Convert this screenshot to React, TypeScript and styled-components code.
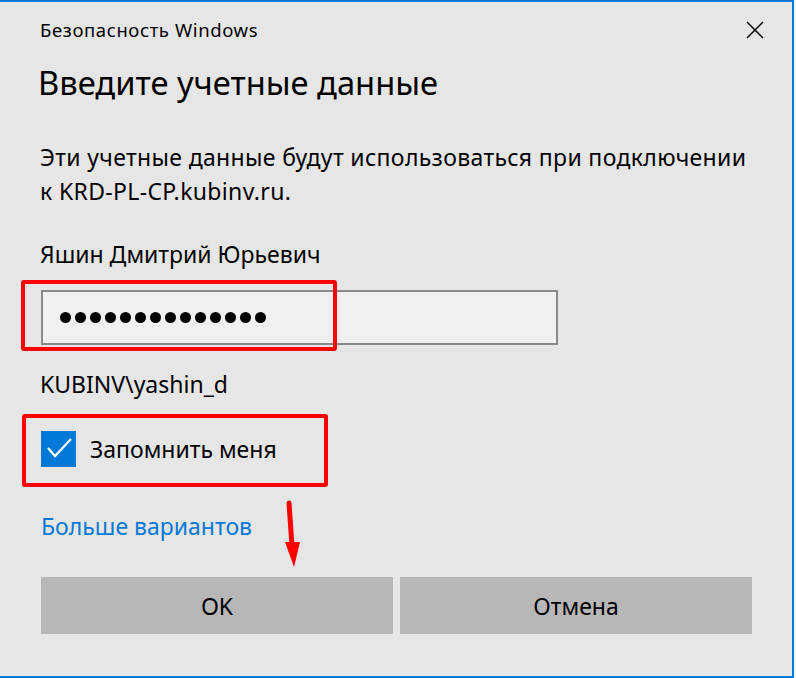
import React from "react";
import styled, { createGlobalStyle } from "styled-components";

const Global = createGlobalStyle`
  html, body { margin: 0; padding: 0; background: #f4f4f4; }
  body { font-family: "Noto Sans", "Open Sans", Arial, sans-serif; }
  * { box-sizing: border-box; }
`;

const Window = styled.div`
  position: relative;
  width: 794px;
  height: 678px;
  background: #e6e6e6;
  border-top: 2px solid #0078d7;
  border-right: 2px solid #0078d7;
  border-bottom: 2px solid #0078d7;
  padding: 0 40px;
  color: #000;
  display: flex;
  flex-direction: column;
`;

const TitleBar = styled.div`
  display: flex;
  align-items: center;
  justify-content: space-between;
  margin-top: 16px;
  margin-right: -12px;
  height: 24px;
`;

const TitleText = styled.div`
  font-size: 18.5px;
  letter-spacing: 0.6px;
  line-height: 24px;
`;

const Close = styled.button`
  width: 18px;
  height: 18px;
  padding: 0;
  border: none;
  background: transparent;
  display: flex;
`;

const Heading = styled.h1`
  margin: 21px 0 0 -2px;
  font-size: 32.7px;
  font-weight: 400;
  line-height: 40px;
`;

const Text = styled.p<{ $mt: number; $track?: number }>`
  margin: ${(p) => p.$mt}px 0 0;
  font-size: 23px;
  line-height: 34px;
  letter-spacing: ${(p) => p.$track ?? 0}px;
`;

const PasswordBox = styled.div`
  margin: 19px 0 0 1px;
  width: 517px;
  height: 55px;
  background: #f0f0f0;
  border: 2px solid #8a8a8a;
  display: flex;
  align-items: center;
  gap: 4px;
  padding-left: 17px;
`;

const Dot = styled.span`
  width: 11px;
  height: 11px;
  border-radius: 50%;
  background: #000;
  flex: none;
`;

const CheckRow = styled.label`
  margin: 30px 0 0 1px;
  display: flex;
  align-items: center;
  gap: 14px;
  height: 36px;
  font-size: 23px;
  line-height: 34px;
`;

const CheckBox = styled.span`
  width: 35px;
  height: 36px;
  background: #0078d7;
  display: flex;
  align-items: center;
  justify-content: center;
`;

const Link = styled.a`
  margin: 42px 0 0 1px;
  color: #0078d7;
  font-size: 23px;
  line-height: 34px;
  text-decoration: none;
  align-self: flex-start;
`;

const Buttons = styled.div`
  margin: 34px 0 0 1px;
  display: grid;
  grid-template-columns: 352px 352px;
  gap: 7px;
`;

const Button = styled.button`
  height: 57px;
  border: none;
  background: #b7b7b7;
  font-family: inherit;
  font-size: 23px;
  color: #000;
  padding: 0;
`;

const Highlight = styled.div<{ $x: number; $y: number; $w: number; $h: number }>`
  position: absolute;
  left: ${(p) => p.$x}px;
  top: ${(p) => p.$y - 2}px;
  width: ${(p) => p.$w}px;
  height: ${(p) => p.$h}px;
  border: 4px solid #ff0000;
  border-radius: 3px;
  pointer-events: none;
`;

const Arrow = styled.svg`
  position: absolute;
  left: 280px;
  top: 496px;
  pointer-events: none;
`;

export default function App() {
  return (
    <>
      <Global />
      <Window>
        <TitleBar>
          <TitleText>Безопасность Windows</TitleText>
          <Close aria-label="Закрыть">
            <svg width="18" height="18" viewBox="0 0 18 18">
              <path d="M1 1 L17 17 M17 1 L1 17" stroke="#000" strokeWidth="1.5" fill="none" />
            </svg>
          </Close>
        </TitleBar>
        <Heading>Введите учетные данные</Heading>
        <Text $mt={37} $track={0.35}>
          Эти учетные данные будут использоваться при подключении
          <br />к KRD-PL-CP.kubinv.ru.
        </Text>
        <Text $mt={29}>Яшин Дмитрий Юрьевич</Text>
        <PasswordBox>
          {Array.from({ length: 14 }).map((_, i) => (
            <Dot key={i} />
          ))}
        </PasswordBox>
        <Text $mt={22}>KUBINV\yashin_d</Text>
        <CheckRow>
          <CheckBox>
            <svg width="30" height="30" viewBox="0 0 30 30">
              <path d="M4 14 L11 22 L27 5" stroke="#fff" strokeWidth="2.2" fill="none" />
            </svg>
          </CheckBox>
          Запомнить меня
        </CheckRow>
        <Link href="#">Больше вариантов</Link>
        <Buttons>
          <Button>OK</Button>
          <Button>Отмена</Button>
        </Buttons>

        <Highlight $x={21} $y={280} $w={316} $h={71} />
        <Highlight $x={22} $y={414} $w={306} $h={73} />
        <Arrow width="30" height="74" viewBox="0 0 30 74">
          <path d="M9 5 L12 48" stroke="#ff0000" strokeWidth="5" strokeLinecap="round" fill="none" />
          <path d="M5 44 L20 44 L14 69 Z" fill="#ff0000" />
        </Arrow>
      </Window>
    </>
  );
}
